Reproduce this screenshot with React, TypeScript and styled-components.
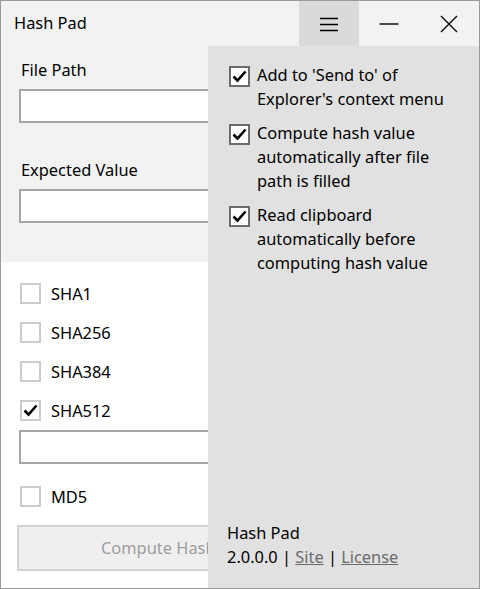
import React from "react";
import styled, { createGlobalStyle } from "styled-components";

const Global = createGlobalStyle`
  html, body { margin: 0; padding: 0; background: #fff; }
  * { box-sizing: border-box; }
`;

const Window = styled.div`
  position: relative;
  width: 480px;
  height: 589px;
  border: 1px solid #9a9a9a;
  background: #fff;
  overflow: hidden;
  font-family: "Noto Sans", "Open Sans", sans-serif;
  font-size: 16.4px;
  color: #000;
  display: flex;
  flex-direction: column;
`;

const TitleBar = styled.div`
  height: 45px;
  background: #f2f2f2;
  display: flex;
  align-items: center;
  flex-shrink: 0;
`;

const Title = styled.div`
  flex: 1;
  padding-left: 13px;
  font-size: 16.4px;
  padding-bottom: 2px;
`;

const CaptionButton = styled.div<{ $active?: boolean }>`
  width: 60px;
  height: 45px;
  display: flex;
  align-items: center;
  justify-content: center;
  background: ${(p) => (p.$active ? "#dadada" : "transparent")};
`;

const Body = styled.div`
  position: relative;
  flex: 1;
  display: flex;
  flex-direction: column;
`;

const TopSection = styled.div`
  background: #f2f2f2;
  padding: 12px 0 39px 18px;
  display: flex;
  flex-direction: column;
`;

const FieldLabel = styled.div<{ $gapTop?: number }>`
  line-height: 24px;
  padding-left: 2px;
  margin-top: ${(p) => p.$gapTop ?? 0}px;
  margin-bottom: 7px;
`;

const TextBox = styled.div`
  height: 34px;
  background: #fff;
  border: 2px solid #a6a6a6;
`;

const BottomSection = styled.div`
  padding: 12px 0 0 18px;
  display: flex;
  flex-direction: column;
`;

const CheckRow = styled.div`
  height: 39px;
  display: flex;
  align-items: center;
  gap: 10px;
  padding-left: 1px;
`;

const Box = styled.div<{ $dark?: boolean }>`
  width: 21px;
  height: 21px;
  flex-shrink: 0;
  background: #fff;
  border: 2px solid ${(p) => (p.$dark ? "#6b6b6b" : "#cccccc")};
  display: flex;
  align-items: center;
  justify-content: center;
`;

const HashInput = styled(TextBox)`
  margin-bottom: 13px;
`;

const ComputeButton = styled.div`
  margin-top: 9px;
  margin-left: -2px;
  height: 46px;
  background: #efefef;
  border: 2px solid #d2d2d2;
  color: #9d9d9d;
  display: flex;
  align-items: center;
  padding-left: 82px;
  padding-bottom: 2px;
`;

const Panel = styled.div`
  position: absolute;
  left: 207px;
  top: 0;
  right: 0;
  bottom: 0;
  background: #e1e1e1;
  padding: 17px 0 19px 21px;
  display: flex;
  flex-direction: column;
`;

const Option = styled.div`
  display: flex;
  align-items: flex-start;
  gap: 7px;
  margin-bottom: 10px;
`;

const OptionBox = styled(Box)`
  margin-top: 3px;
`;

const OptionText = styled.div`
  line-height: 24px;
`;

const Footer = styled.div`
  margin-top: auto;
  line-height: 24px;
  margin-left: -2px;
`;

const Link = styled.a`
  color: #6b6b6b;
  text-decoration: underline;
`;

const Check = () => (
  <svg width="15" height="13" viewBox="0 0 15 13">
    <path d="M1.5 6.5 L5.5 10.5 L13.5 1.5" fill="none" stroke="#000" strokeWidth="2.6" />
  </svg>
);

const algos: { name: string; checked: boolean }[] = [
  { name: "SHA1", checked: false },
  { name: "SHA256", checked: false },
  { name: "SHA384", checked: false },
  { name: "SHA512", checked: true },
];

export default function App() {
  return (
    <>
      <Global />
      <Window>
        <TitleBar>
          <Title>Hash Pad</Title>
          <CaptionButton $active>
            <svg width="20" height="16" viewBox="0 0 20 16">
              <path d="M1 2.5H19M1 8.5H19M1 14.5H19" stroke="#000" strokeWidth="1.4" />
            </svg>
          </CaptionButton>
          <CaptionButton>
            <svg width="20" height="4" viewBox="0 0 20 4">
              <path d="M0.5 2H19.5" stroke="#000" strokeWidth="1.4" />
            </svg>
          </CaptionButton>
          <CaptionButton>
            <svg width="18" height="18" viewBox="0 0 18 18">
              <path d="M1 1L17 17M17 1L1 17" stroke="#000" strokeWidth="1.3" />
            </svg>
          </CaptionButton>
        </TitleBar>
        <Body>
          <TopSection>
            <FieldLabel>File Path</FieldLabel>
            <TextBox />
            <FieldLabel $gapTop={35}>Expected Value</FieldLabel>
            <TextBox />
          </TopSection>
          <BottomSection>
            {algos.map((a) => (
              <CheckRow key={a.name}>
                <Box>{a.checked && <Check />}</Box>
                {a.name}
              </CheckRow>
            ))}
            <HashInput />
            <CheckRow>
              <Box />
              MD5
            </CheckRow>
            <ComputeButton>Compute Hash</ComputeButton>
          </BottomSection>
          <Panel>
            <Option>
              <OptionBox $dark>
                <Check />
              </OptionBox>
              <OptionText>
                Add to 'Send to' of
                <br />
                Explorer's context menu
              </OptionText>
            </Option>
            <Option>
              <OptionBox $dark>
                <Check />
              </OptionBox>
              <OptionText>
                Compute hash value
                <br />
                automatically after file
                <br />
                path is filled
              </OptionText>
            </Option>
            <Option>
              <OptionBox $dark>
                <Check />
              </OptionBox>
              <OptionText>
                Read clipboard
                <br />
                automatically before
                <br />
                computing hash value
              </OptionText>
            </Option>
            <Footer>
              Hash Pad
              <br />
              2.0.0.0 | <Link>Site</Link> | <Link>License</Link>
            </Footer>
          </Panel>
        </Body>
      </Window>
    </>
  );
}
